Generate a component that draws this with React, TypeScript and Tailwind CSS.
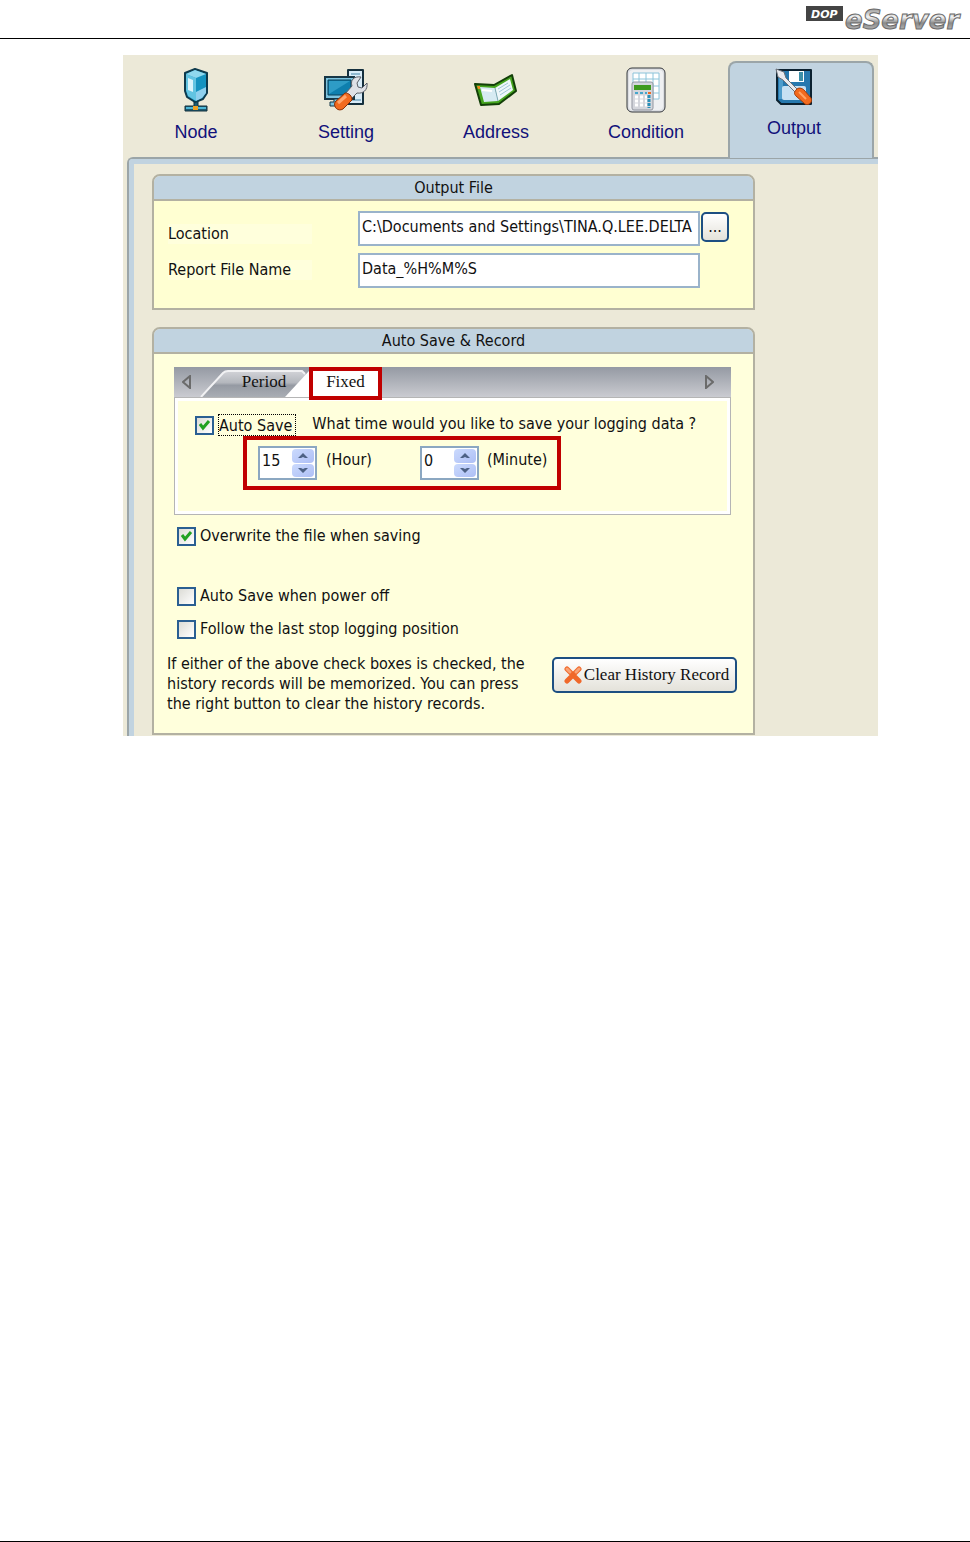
/** @format */

import React, { useState } from "react";

const NodeIcon = () => (
  <svg width="26" height="44" viewBox="0 0 26 44" aria-hidden="true">
    <path d="M11 33h4v5h9v5H2v-5h9z" fill="#1c5b72" stroke="#12303c" />
    <path d="M3 40h20" stroke="#4cb6d6" strokeWidth="2" />
    <rect x="10" y="38" width="5" height="4" fill="#f0a020" />
    <path
      d="M2 5L12 1l12 4v20l-4 6-8 3-8-5-2-6z"
      fill="#1593c0"
      stroke="#0e3a4d"
      strokeWidth="2"
      strokeLinejoin="round"
    />
    <path d="M3 6l10 4v23l-8-5-2-6z" fill="#62c4e2" />
    <path d="M3 6l9-4 11 4-10 4z" fill="#8fd8ee" />
    <path d="M5 10l5 2v12l-5-2z" fill="#d9f4fc" />
    <path d="M13 24l10-5v6l-4 5-6 3z" fill="#8fd0ee" />
  </svg>
);

const SettingIcon = () => (
  <svg width="46" height="44" viewBox="0 0 46 44" aria-hidden="true">
    <path
      d="M25 2h15v34H25z"
      fill="#d9ecf8"
      stroke="#15303e"
      strokeWidth="2"
      strokeLinejoin="round"
    />
    <path d="M28 6h9M28 32h10" stroke="#8fb9d0" strokeWidth="2" />
    <path d="M2 9h29v22H2z" fill="#7cc4e0" stroke="#173746" strokeWidth="2" />
    <path d="M5 12h23v15H5z" fill="#0e7fae" stroke="#0b4059" />
    <path d="M6 13h21L6 26z" fill="#2e9cc6" />
    <path d="M11 31h12v3h-5v4H7v-4h4z" fill="#7cc4e0" stroke="#173746" />
    <path
      d="M22 26l7-8c-2-6 2-10 9-9l-4 6 1 4 4 1 5-5c1 7-4 11-10 10l-7 7z"
      fill="#dfe1e6"
      stroke="#5a5e66"
      strokeLinejoin="round"
    />
    <path
      d="M12 34l10-9c4 0 7 3 7 7l-9 9c-5 3-10-2-8-7z"
      fill="#f26a1e"
      stroke="#8a2f05"
    />
    <path d="M15 35l8-7" stroke="#ffa56c" strokeWidth="3" />
  </svg>
);

const AddressIcon = () => (
  <svg width="44" height="34" viewBox="0 0 44 34" aria-hidden="true">
    <path
      d="M1 11l19 1L38 2l4 16-17 13-18 1z"
      fill="#46a51f"
      stroke="#123f08"
      strokeWidth="2"
      strokeLinejoin="round"
    />
    <path d="M6 14l15 1 3 13-14 1z" fill="#d7ebf3" />
    <path d="M21 15L36 6l3 11-15 11z" fill="#eef7fa" />
    <path d="M21 15l3 13" stroke="#7fa9b8" />
    <path d="M24 16l10-6M25 19l11-7M26 22l11-7" stroke="#a2c6d8" />
    <path d="M3 13h3v3H4z" fill="#f08a1c" />
    <path d="M8 17l10 1" stroke="#fff" strokeWidth="2" />
  </svg>
);

const ConditionIcon = () => (
  <svg width="40" height="46" viewBox="0 0 40 46" aria-hidden="true">
    <rect
      x="1"
      y="1"
      width="38"
      height="44"
      rx="5"
      fill="#dcdee2"
      stroke="#33363b"
      strokeWidth="1"
    />
    <rect x="3" y="3" width="34" height="40" rx="4" fill="#eff0f2" />
    <path d="M7 6h26v26H7z" fill="#fff" />
    <path
      d="M7 6h26v26H7zM13 6v26M20 6v26M27 6v26M7 12h26M7 19h26M7 26h26"
      fill="none"
      stroke="#8cc4da"
    />
    <rect x="6" y="15" width="21" height="28" rx="2" fill="#d4d6dc" stroke="#9296a0" />
    <rect x="8" y="18" width="17" height="5" fill="#3f9a1e" />
    <path d="M9 26h12" stroke="#45a6cc" strokeWidth="2" strokeDasharray="3 2" />
    <path
      d="M9 30h12M9 34h12M9 38h12"
      stroke="#fff"
      strokeWidth="3"
      strokeDasharray="3 2"
    />
    <path d="M23 28v13" stroke="#2a8fb8" strokeWidth="3" strokeDasharray="3 1" />
    <path d="M22 26h3" stroke="#ee6a25" strokeWidth="2" />
  </svg>
);

const OutputIcon = () => (
  <svg width="38" height="38" viewBox="0 0 38 38" aria-hidden="true">
    <path
      d="M2 2h34v34H6l-4-4z"
      fill="#2678ae"
      stroke="#0b2130"
      strokeWidth="2"
      strokeLinejoin="round"
    />
    <path d="M4 4h4v27H4z" fill="#4d9ccb" />
    <path d="M14 3h15v11H14z" fill="#fff" />
    <path d="M24 4h4v9h-4z" fill="#3d8fa8" />
    <rect x="7" y="18" width="24" height="14" rx="2" fill="#c6e0f2" />
    <path d="M1 1l8 3 2 6 12 12-2 3L8 12 3 9z" fill="#e8eaee" stroke="#6a6f76" />
    <path
      d="M21 22c2-3 6-2 8 0l7 8c2 4-2 8-6 6l-9-8c-2-2-2-4 0-6z"
      fill="#f26a1e"
      stroke="#a33c08"
    />
    <path d="M24 24l7 7" stroke="#ffa465" strokeWidth="2" />
  </svg>
);

const Logo = () => (
  <svg width="164" height="38" viewBox="0 0 164 38" role="img" aria-label="DOP eServer">
    <defs>
      <linearGradient id="chrome" x1="0" y1="0" x2="0" y2="1">
        <stop offset="0" stopColor="#6f6f6f" />
        <stop offset="0.4" stopColor="#f4f4f4" />
        <stop offset="0.6" stopColor="#8a8a8a" />
        <stop offset="1" stopColor="#d8d8d8" />
      </linearGradient>
    </defs>
    <rect x="0" y="6" width="37" height="15" fill="#444" />
    <text
      x="5"
      y="18"
      fill="#fff"
      fontSize="11"
      fontWeight="700"
      fontStyle="italic"
      fontFamily="DejaVu Sans, sans-serif">
      DOP
    </text>
    <text
      x="39"
      y="29"
      fill="url(#chrome)"
      stroke="#6b6b6b"
      strokeWidth="1"
      fontSize="26"
      fontWeight="700"
      fontStyle="italic"
      fontFamily="DejaVu Sans, sans-serif">
      eServer
    </text>
  </svg>
);

const tabs = [
  { name: "Node", Icon: NodeIcon },
  { name: "Setting", Icon: SettingIcon },
  { name: "Address", Icon: AddressIcon },
  { name: "Condition", Icon: ConditionIcon },
];

function Panel({ title, children }: { title: string; children: React.ReactNode }) {
  return (
    <section className="overflow-hidden rounded-t-lg border-2 border-[#b3b1a2]">
      <h2 className="h-[25px] border-b-2 border-[#b3b1a2] bg-[#c1d3e0] text-center leading-[23px]">
        {title}
      </h2>
      {children}
    </section>
  );
}

function Check({
  label,
  checked = false,
  focused = false,
}: {
  label: string;
  checked?: boolean;
  focused?: boolean;
}) {
  return (
    <label className="flex items-center gap-1 whitespace-nowrap">
      <span className="relative flex">
        <input
          type="checkbox"
          defaultChecked={checked}
          className="peer size-[19px] appearance-none border-2 border-[#2a5f92] bg-linear-to-br from-[#dcdcd6] to-white"
        />
        <svg
          viewBox="0 0 19 19"
          className="pointer-events-none absolute inset-0 hidden size-[19px] peer-checked:block">
          <path d="M5 8l3 4 6-7" fill="none" stroke="#21a121" strokeWidth="3" />
        </svg>
      </span>
      <span
        className={
          focused
            ? "h-[22px] border border-dotted border-black pr-[3px] leading-[22px]"
            : ""
        }>
        {label}
      </span>
    </label>
  );
}

function Spinner({ id, initial, max }: { id: string; initial: number; max: number }) {
  const [value, setValue] = useState(initial);

  const step = (by: number) =>
    setValue((v) => Math.min(max, Math.max(0, v + by)));

  return (
    <div className="flex h-[34px] w-[59px] border-2 border-[#8ba7c1] bg-white p-px">
      <input
        id={id}
        inputMode="numeric"
        value={value}
        onChange={(e) => setValue(Number(e.target.value) || 0)}
        className="min-w-0 flex-1 pb-1 pl-px outline-none"
      />
      <div className="flex w-[22px] flex-col gap-px">
        <button
          aria-label="Increase"
          onClick={() => step(1)}
          className="flex flex-1 items-center justify-center rounded-sm bg-linear-to-br from-[#cbdafd] to-[#aebff5]">
          <svg width="12" height="7" viewBox="0 0 12 7">
            <path d="M1 6l5-5 5 5-3 0-2-1-2 1z" fill="#4d6185" />
          </svg>
        </button>
        <button
          aria-label="Decrease"
          onClick={() => step(-1)}
          className="flex flex-1 items-center justify-center rounded-sm bg-linear-to-br from-[#cbdafd] to-[#aebff5]">
          <svg width="12" height="7" viewBox="0 0 12 7">
            <path d="M1 1l5 5 5-5-3 0-2 1-2-1z" fill="#4d6185" />
          </svg>
        </button>
      </div>
    </div>
  );
}

export default function App() {
  const [location, setLocation] = useState(
    "C:\\Documents and Settings\\TINA.Q.LEE.DELTA"
  );
  const [fileName, setFileName] = useState("Data_%H%M%S");

  return (
    <div className="flex min-h-screen flex-col border-b border-black bg-white font-['DejaVu_Sans_Condensed','DejaVu_Sans',sans-serif] text-[16px] leading-5 text-[#111]">
      <header className="flex h-[39px] justify-end border-b border-black">
        <Logo />
      </header>

      <main className="mt-4 mr-[92px] ml-[123px] bg-[#ece9d8] pt-[6px]">
        {/* Page tabs */}
        <nav className="flex gap-1 pr-1 font-['Liberation_Sans',Arial,sans-serif] text-[18px] text-[#11117a]">
          {tabs.map(({ name, Icon }) => (
            <button key={name} className="flex h-24 flex-1 flex-col items-center">
              <span className="mb-1 flex h-[57px] items-center">
                <Icon />
              </span>
              <span>{name}</span>
            </button>
          ))}
          <div className="relative z-10 -mb-px ml-[5px] flex flex-1">
            <button className="flex w-full flex-col items-center rounded-t-lg border-2 border-b-0 border-[#9ba5a8] bg-[#c1d3e0] pt-[5px] pr-[14px]">
              <OutputIcon />
              <span className="mt-3">Output</span>
            </button>
          </div>
        </nav>

        <div className="ml-1 rounded-tl-md border-t-2 border-l-2 border-[#9ba5a8]">
          <div className="rounded-tl-sm border-t-[5px] border-l-[5px] border-[#c1d3e0] pt-[10px] pr-[123px] pb-px pl-[18px]">
            <Panel title="Output File">
              <div className="flex flex-col gap-[7px] bg-[#ffffd2] pt-[10px] pr-6 pb-5 pl-[14px]">
                <div className="flex items-start">
                  <label
                    htmlFor="location"
                    className="mt-[13px] mr-[46px] w-36 shrink-0 bg-[#ffffdc]">
                    Location
                  </label>
                  <input
                    id="location"
                    value={location}
                    onChange={(e) => setLocation(e.target.value)}
                    className="h-[35px] min-w-0 flex-1 border-2 border-[#9ab3ca] bg-white px-[2px] pb-1"
                  />
                  <button className="mt-px ml-px h-[30px] w-7 rounded-[5px] border-2 border-[#1d4f82] bg-linear-to-b from-white to-[#e4e2da]">
                    ...
                  </button>
                </div>
                <div className="flex items-start">
                  <label
                    htmlFor="file-name"
                    className="mt-[7px] mr-[46px] w-36 shrink-0 bg-[#ffffdc]">
                    Report File Name
                  </label>
                  <input
                    id="file-name"
                    value={fileName}
                    onChange={(e) => setFileName(e.target.value)}
                    className="mr-[29px] h-[35px] min-w-0 flex-1 border-2 border-[#9ab3ca] bg-white px-[2px] pb-1"
                  />
                </div>
              </div>
            </Panel>

            <div className="h-[17px]" />

            <Panel title="Auto Save & Record">
              <div className="bg-[#ffffdc] pt-[13px] pr-4 pb-[19px] pl-[13px]">
                <div className="mr-[6px] ml-[7px]">
                  {/* Period / Fixed tab strip */}
                  <div className="flex h-[30px] items-center bg-linear-to-b from-[#959aa3] to-[#cacbd1] font-['Liberation_Serif','Times_New_Roman',serif] text-[17px]">
                    <button aria-label="Previous tab" className="w-[26px] pl-2">
                      <svg width="10" height="14" viewBox="0 0 10 14">
                        <path d="M8 1v12L1 7z" fill="none" stroke="#6b6b6b" strokeWidth="2" />
                      </svg>
                    </button>
                    <div className="relative flex h-[30px] items-center">
                      <svg
                        width="184"
                        height="30"
                        viewBox="0 0 184 30"
                        className="absolute inset-0"
                        aria-hidden="true">
                        <defs>
                          <linearGradient id="tabFace" x1="0" y1="0" x2="0" y2="1">
                            <stop offset="0" stopColor="#d2d3d8" />
                            <stop offset="0.45" stopColor="#b4b7bd" />
                            <stop offset="0.55" stopColor="#959aa3" />
                            <stop offset="1" stopColor="#a9adb4" />
                          </linearGradient>
                        </defs>
                        <path d="M1 30L23 6q2-2 5-2h74l6 5v21z" fill="url(#tabFace)" />
                        <path
                          d="M1 30L23 6q2-2 5-2h74l3 3"
                          fill="none"
                          stroke="#f1f1f3"
                          strokeWidth="2"
                        />
                        <path d="M85 30l24-26h73v26z" fill="#fff" />
                      </svg>
                      <button className="relative h-[30px] w-[109px] pl-[19px]">Period</button>
                      <button className="relative -mb-[3px] h-[33px] w-[73px] border-4 border-[#c00000] bg-white pb-[3px]">
                        Fixed
                      </button>
                    </div>
                    <button aria-label="Next tab" className="mr-[17px] ml-auto">
                      <svg width="10" height="14" viewBox="0 0 10 14">
                        <path d="M2 1v12l7-6z" fill="none" stroke="#6b6b6b" strokeWidth="2" />
                      </svg>
                    </button>
                  </div>

                  <div className="h-[118px] border border-[#b5b5b5] bg-[#ffffdc]">
                    <div className="h-full border-[3px] border-white pt-[13px] pl-[17px]">
                      <div className="flex items-start gap-4">
                        <Check label="Auto Save" checked focused />
                        <span className="whitespace-nowrap">
                          What time would you like to save your logging data ?
                        </span>
                      </div>
                      <div className="ml-12 flex h-[54px] w-[318px] items-start border-4 border-[#c00000] pt-[6px] pl-[11px]">
                        <Spinner id="hour" initial={15} max={23} />
                        <label htmlFor="hour" className="ml-[9px] w-[94px] pt-1">
                          (Hour)
                        </label>
                        <Spinner id="minute" initial={0} max={59} />
                        <label htmlFor="minute" className="ml-2 pt-1">
                          (Minute)
                        </label>
                      </div>
                    </div>
                  </div>
                </div>

                <div className="mt-[11px] ml-[10px] flex flex-col">
                  <Check label="Overwrite the file when saving" checked />
                  <div className="mt-10 flex flex-col gap-[13px]">
                    <Check label="Auto Save when power off" />
                    <Check label="Follow the last stop logging position" />
                  </div>
                </div>

                <div className="mt-[15px] flex items-start justify-between">
                  <p className="whitespace-nowrap">
                    If either of the above check boxes is checked, the
                    <br />
                    history records will be memorized. You can press
                    <br />
                    the right button to clear the history records.
                  </p>
                  <button className="mt-[3px] flex h-[36px] w-[185px] shrink-0 items-center justify-center gap-[2px] rounded-[5px] border-2 border-[#1d4f82] bg-linear-to-b from-white to-[#e4e2da] pl-1 font-['Liberation_Serif','Times_New_Roman',serif] text-[17px] whitespace-nowrap">
                    <svg width="18" height="18" viewBox="0 0 18 18" aria-hidden="true">
                      <path
                        d="M3 3l12 12M15 3L3 15"
                        stroke="#f0682a"
                        strokeWidth="5"
                        strokeLinecap="round"
                      />
                      <path
                        d="M3 3l3 3M15 3l-3 3"
                        stroke="#f9a376"
                        strokeWidth="3"
                        strokeLinecap="round"
                      />
                    </svg>
                    Clear History Record
                  </button>
                </div>
              </div>
            </Panel>
          </div>
        </div>
      </main>
    </div>
  );
}
